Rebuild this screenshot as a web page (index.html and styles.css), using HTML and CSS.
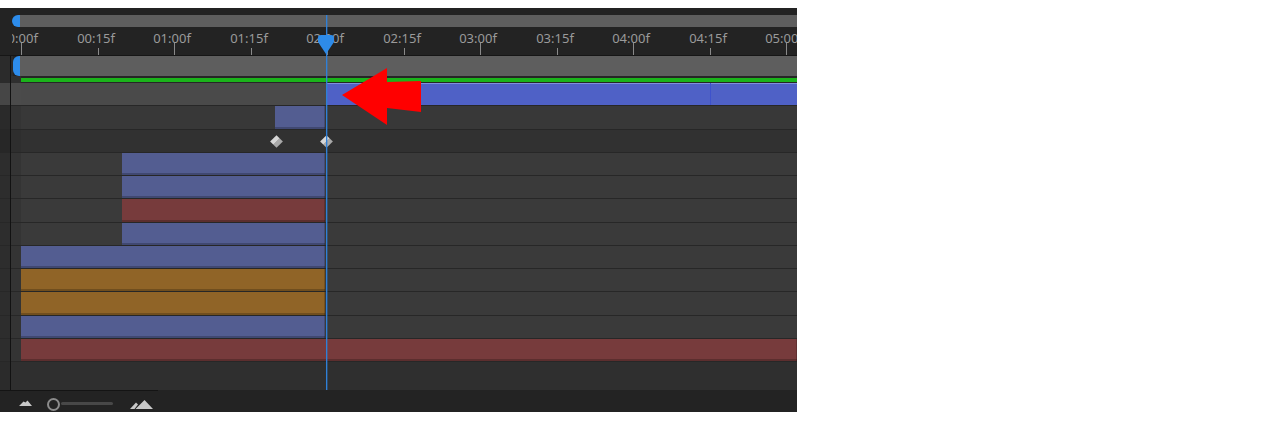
FILE: index.html
```
<!DOCTYPE html>
<html>
<head>
<meta charset="utf-8">
<link rel="stylesheet" href="styles.css">
</head>
<body>
<div class="panel">
  <div class="scroll-row">
    <div class="scroll-corner"></div>
    <div class="scroll-knob"></div>
    <div class="scroll-bar"></div>
  </div>

  <div class="ruler">
    <div class="ruler-left"></div>
    <div class="ruler-canvas">
      <span class="label" style="left:7px">00:00f</span><span class="tick major" style="left:9px"></span>
      <span class="label" style="left:84px">00:15f</span><span class="tick" style="left:86px"></span>
      <span class="label" style="left:160px">01:00f</span><span class="tick major" style="left:162px"></span>
      <span class="label" style="left:237px">01:15f</span><span class="tick" style="left:239px"></span>
      <span class="label" style="left:313px">02:00f</span><span class="tick major" style="left:315px"></span>
      <span class="label" style="left:390px">02:15f</span><span class="tick" style="left:392px"></span>
      <span class="label" style="left:466px">03:00f</span><span class="tick major" style="left:468px"></span>
      <span class="label" style="left:543px">03:15f</span><span class="tick" style="left:545px"></span>
      <span class="label" style="left:619px">04:00f</span><span class="tick major" style="left:621px"></span>
      <span class="label" style="left:696px">04:15f</span><span class="tick" style="left:698px"></span>
      <span class="label" style="left:772px">05:00f</span><span class="tick major" style="left:774px"></span>
    </div>
  </div>

  <div class="work-row">
    <div class="w-a"></div><div class="vl"></div><div class="w-gap"></div><div class="w-knob"></div><div class="w-bar"></div>
  </div>

  <div class="lane green-row">
    <div class="ca"></div><div class="vl"></div><div class="cb"></div><div class="tk"><div class="green"></div></div>
  </div>

  <div class="lane trow hl">
    <div class="ca"></div><div class="vl"></div><div class="cb"></div>
    <div class="tk"><div class="clip bright" style="margin-left:305px;width:471px"><span class="sec-mark" style="left:384px"></span></div></div>
  </div>
  <div class="lane trow dim">
    <div class="ca"></div><div class="vl"></div><div class="cb"></div>
    <div class="tk"><div class="clip blue" style="margin-left:254px;width:50px"></div></div>
  </div>
  <div class="lane trow kfrow">
    <div class="ca"></div><div class="vl"></div><div class="cb"></div>
    <div class="tk"><span class="kf" style="left:251px"></span><span class="kf" style="left:301px"></span></div>
  </div>
  <div class="lane trow">
    <div class="ca"></div><div class="vl"></div><div class="cb"></div>
    <div class="tk"><div class="clip blue" style="margin-left:101px;width:203px"></div></div>
  </div>
  <div class="lane trow">
    <div class="ca"></div><div class="vl"></div><div class="cb"></div>
    <div class="tk"><div class="clip blue" style="margin-left:101px;width:203px"></div></div>
  </div>
  <div class="lane trow">
    <div class="ca"></div><div class="vl"></div><div class="cb"></div>
    <div class="tk"><div class="clip red" style="margin-left:101px;width:203px"></div></div>
  </div>
  <div class="lane trow">
    <div class="ca"></div><div class="vl"></div><div class="cb"></div>
    <div class="tk"><div class="clip blue" style="margin-left:101px;width:203px"></div></div>
  </div>
  <div class="lane trow">
    <div class="ca"></div><div class="vl"></div><div class="cb"></div>
    <div class="tk"><div class="clip blue" style="margin-left:0;width:304px"></div></div>
  </div>
  <div class="lane trow">
    <div class="ca"></div><div class="vl"></div><div class="cb"></div>
    <div class="tk"><div class="clip orange" style="margin-left:0;width:304px"></div></div>
  </div>
  <div class="lane trow">
    <div class="ca"></div><div class="vl"></div><div class="cb"></div>
    <div class="tk"><div class="clip orange" style="margin-left:0;width:304px"></div></div>
  </div>
  <div class="lane trow">
    <div class="ca"></div><div class="vl"></div><div class="cb"></div>
    <div class="tk"><div class="clip blue" style="margin-left:0;width:304px"></div></div>
  </div>
  <div class="lane trow">
    <div class="ca"></div><div class="vl"></div><div class="cb"></div>
    <div class="tk"><div class="clip red" style="margin-left:0;width:776px"></div></div>
  </div>

  <div class="lane empty-row">
    <div class="ca"></div><div class="vl"></div><div class="cb"></div><div class="tk"></div>
  </div>

  <div class="bottom">
    <div class="zoom-controls">
      <svg class="ico-small" width="13" height="6" viewBox="0 0 13 6"><path d="M0 6 L4.5 1.5 L6.5 2.5 L8.5 0.5 L13 6 Z" fill="#c9c9c9"/></svg>
      <div class="slider">
        <span class="slider-knob"></span>
        <span class="slider-track"></span>
      </div>
      <svg class="ico-big" width="23" height="9" viewBox="0 0 23 9"><path d="M0 9 L6 2.5 L8 4.5 L4.5 9 Z M5.5 9 L14.5 0 L23 9 Z" fill="#c9c9c9"/></svg>
    </div>
    <div class="bottom-rest"></div>
  </div>

  <div class="playhead-line"></div>
  <svg class="playhead-head" width="16" height="19" viewBox="0 0 16 19"><path d="M0 3 Q0 0 3 0 H13 Q16 0 16 3 V7 L8 19 L0 7 Z" fill="#2e8be8"/></svg>
  <svg class="arrow" width="82" height="58" viewBox="0 0 82 58"><polygon points="2,27 47,0 47,14 81,13 81,44 47,40 47,57" fill="#ff0000"/></svg>
</div>
</body>
</html>
```

FILE: styles.css
```
html, body {
  margin: 0;
  background: #ffffff;
}
body {
  font-family: "Noto Sans", "DejaVu Sans", sans-serif;
}
.panel {
  position: relative;
  width: 797px;
  margin-top: 8px;
  background: #232323;
  overflow: hidden;
}

/* top scrollbar */
.scroll-row {
  display: flex;
  height: 20px;
  padding-top: 7px;
  box-sizing: border-box;
}
.scroll-corner { width: 12px; }
.scroll-knob {
  width: 8px;
  height: 12px;
  background: #2d8ceb;
  border-radius: 6px 0 0 6px;
}
.scroll-bar {
  flex: 1;
  height: 12px;
  background: #5e5e5e;
}

/* ruler */
.ruler {
  display: flex;
  height: 27px;
}
.ruler-left { width: 12px; }
.ruler-canvas {
  flex: 1;
  position: relative;
  overflow: hidden;
}
.label {
  position: absolute;
  top: 2px;
  transform: translateX(-50%);
  font-size: 13px;
  line-height: 16px;
  color: #9a9a9a;
  white-space: nowrap;
}
.tick {
  position: absolute;
  bottom: 0;
  width: 1px;
  height: 7px;
  background: #8a8a8a;
}
.tick.major { height: 12px; }

/* work area bar */
.work-row {
  display: grid;
  grid-template-columns: 10px 1px 2px 7px 1fr;
  height: 21px;
  border-top: 1px solid #161616;
  box-sizing: border-box;
}
.w-a, .w-gap { background: #2b2b2b; }
.w-knob {
  background: #2d8ceb;
  border-radius: 6px 0 0 6px;
}
.w-bar { background: #5e5e5e; }

/* lanes */
.lane {
  display: grid;
  grid-template-columns: 10px 1px 10px 1fr;
}
.vl { background: #121212; }
.ca { background: #2d2d2d; }
.cb { background: #343434; }

.green-row { height: 7px; }
.green-row .ca { background: #2b2b2b; }
.green-row .cb { background: #2f2f2f; }
.green-row .tk {
  border-top: 2px solid #262626;
  border-bottom: 1px solid #262626;
}
.green {
  height: 4px;
  background: #1bb31b;
}

.trow { height: 23.25px; }
.trow .ca, .trow .cb, .trow .tk {
  border-bottom: 1px solid #272727;
  box-sizing: border-box;
}
.trow .tk {
  position: relative;
  background: #3a3a3a;
}
.trow.hl .ca { background: #464646; }
.trow.hl .cb { background: #4b4b4b; }
.trow.hl .tk { background: #4a4a4a; }
.trow.dim .ca { background: #2a2a2a; }
.trow.dim .tk { background: #383838; }
.trow.kfrow .ca { background: #272727; }
.trow.kfrow .cb { background: #2e2e2e; }
.trow.kfrow .tk { background: #313131; }

.clip {
  position: relative;
  height: 100%;
  box-shadow: inset 0 -2px 0 rgba(0, 0, 0, 0.22), inset -1px 0 0 rgba(0, 0, 0, 0.18);
}
.clip.blue { background: #535d91; }
.clip.red { background: #773b3c; }
.clip.orange { background: #906427; }
.clip.bright {
  background: #4f61c6;
  box-shadow: inset 0 1px 0 #8090dc, inset 1px 0 0 #8090dc;
}
.sec-mark {
  position: absolute;
  top: 0;
  bottom: 0;
  width: 1px;
  background: #3e52cc;
}
.kf {
  position: absolute;
  top: 7px;
  width: 9px;
  height: 9px;
  transform: rotate(45deg);
  background: linear-gradient(90deg, #d6d6d6 0%, #d6d6d6 50%, #a9a9a9 50%, #a9a9a9 100%);
}

.empty-row { height: 28px; }
.empty-row .ca { background: #2b2b2b; }
.empty-row .cb { background: #2f2f2f; }
.empty-row .tk { background: #2f2f2f; }

/* bottom bar */
.bottom {
  display: flex;
  height: 22px;
  background: #232323;
}
.zoom-controls {
  width: 158px;
  display: flex;
  align-items: center;
  padding-left: 19px;
  padding-top: 5px;
  box-sizing: border-box;
  border-top: 1px solid #141414;
}
.ico-small { margin-top: -2px; }
.slider {
  display: flex;
  align-items: center;
  margin-left: 15px;
}
.slider-knob {
  width: 9px;
  height: 9px;
  border: 2px solid #8c8c8c;
  border-radius: 50%;
  background: #232323;
}
.slider-track {
  width: 52px;
  height: 3px;
  border-radius: 2px;
  background: #484848;
  margin-left: 1px;
  margin-top: -2px;
}
.ico-big { margin-left: 17px; }
.bottom-rest { flex: 1; }

/* overlays */
.playhead-line {
  position: absolute;
  left: 326px;
  top: 7px;
  width: 1px;
  height: 375px;
  background: #2f80d8;
  box-shadow: 1px 0 0 rgba(47, 128, 216, 0.35);
}
.playhead-head {
  position: absolute;
  left: 318px;
  top: 27px;
}
.arrow {
  position: absolute;
  left: 340px;
  top: 60px;
}
```
